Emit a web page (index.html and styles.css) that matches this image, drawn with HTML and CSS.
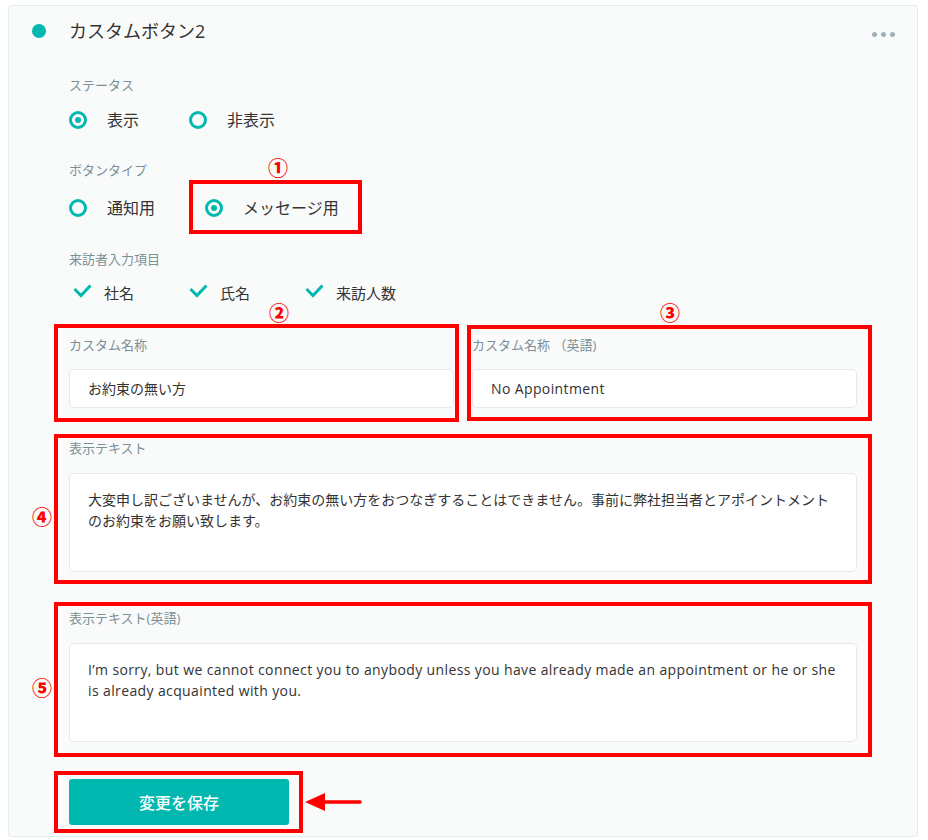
FILE: index.html
```html
<!DOCTYPE html>
<html lang="ja">
<head>
<meta charset="utf-8">
<title>カスタムボタン2</title>
<link rel="stylesheet" href="styles.css">
</head>
<body>
<div class="page">
  <section class="card">
    <header class="card-head">
      <span class="status-dot"></span>
      <h2 class="card-title">カスタムボタン2</h2>
      <span class="more"><i></i><i></i><i></i></span>
    </header>
    <div class="card-body">
      <div class="group g-status">
        <div class="label">ステータス</div>
        <div class="options">
          <span class="radio checked"><span class="radio-mark"></span>表示</span>
          <span class="radio"><span class="radio-mark"></span>非表示</span>
        </div>
      </div>
      <div class="group g-type">
        <div class="label">ボタンタイプ</div>
        <div class="options">
          <span class="radio"><span class="radio-mark"></span>通知用</span>
          <span class="radio checked"><span class="radio-mark"></span>メッセージ用</span>
        </div>
      </div>
      <div class="group g-visitor">
        <div class="label">来訪者入力項目</div>
        <div class="checks">
          <span class="check"><svg class="check-icon" viewBox="0 0 19 14" width="19" height="14"><polyline points="1.5,5 8,11.5 17.5,1.5"/></svg>社名</span>
          <span class="check"><svg class="check-icon" viewBox="0 0 19 14" width="19" height="14"><polyline points="1.5,5 8,11.5 17.5,1.5"/></svg>氏名</span>
          <span class="check"><svg class="check-icon" viewBox="0 0 19 14" width="19" height="14"><polyline points="1.5,5 8,11.5 17.5,1.5"/></svg>来訪人数</span>
        </div>
      </div>
      <div class="name-row">
        <div class="field">
          <div class="label">カスタム名称</div>
          <div class="input">お約束の無い方</div>
        </div>
        <div class="field">
          <div class="label">カスタム名称 （英語)</div>
          <div class="input en">No Appointment</div>
        </div>
      </div>
      <div class="field g-text">
        <div class="label">表示テキスト</div>
        <div class="textarea">大変申し訳ございませんが、お約束の無い方をおつなぎすることはできません。事前に弊社担当者とアポイントメントのお約束をお願い致します。</div>
      </div>
      <div class="field g-text-en">
        <div class="label">表示テキスト(英語)</div>
        <div class="textarea en">I’m sorry, but we cannot connect you to anybody unless you have already made an appointment or he or she is already acquainted with you.</div>
      </div>
      <button class="save-btn" type="button">変更を保存</button>
    </div>
  </section>

  <div class="annot box box-1"></div>
  <div class="annot num num-1">①</div>
  <div class="annot box box-2"></div>
  <div class="annot num num-2">②</div>
  <div class="annot box box-3"></div>
  <div class="annot num num-3">③</div>
  <div class="annot box box-4"></div>
  <div class="annot num num-4">④</div>
  <div class="annot box box-5"></div>
  <div class="annot num num-5">⑤</div>
  <div class="annot box box-6"></div>
  <svg class="annot arrow" viewBox="0 0 60 22" width="60" height="22">
    <polygon points="2,11 22,2 22,20" fill="#ff0000"/>
    <line x1="20" y1="11" x2="57" y2="11" stroke="#ff0000" stroke-width="3.5" stroke-linecap="round"/>
  </svg>
</div>
</body>
</html>
```

FILE: styles.css
```css
* { box-sizing: border-box; }

html, body {
  margin: 0;
  padding: 0;
  background: #ffffff;
}

body {
  font-family: "Open Sans", "Noto Sans CJK JP", sans-serif;
  color: #333333;
}

.page {
  position: relative;
  padding: 5px 0 0 8px;
  width: 928px;
  height: 840px;
}

.card {
  width: 910px;
  height: 832px;
  background: #f9fbfb;
  border: 1px solid #e2eded;
  border-radius: 3px;
}

/* header */
.card-head {
  display: flex;
  align-items: center;
  padding: 13px 22px 0 23px;
  height: 37px;
}

.status-dot {
  width: 14px;
  height: 14px;
  border-radius: 50%;
  background: #00b8b0;
  flex: none;
}

.card-title {
  margin: 0 0 0 23px;
  font-size: 18px;
  font-weight: 400;
  line-height: 24px;
  color: #333333;
  flex: 1;
}

.more {
  display: flex;
  gap: 4px;
  margin-top: 6px;
}

.more i {
  width: 5px;
  height: 5px;
  border-radius: 50%;
  background: #a0b2b9;
}

/* body */
.card-body {
  padding: 0 60px 11px;
}

.label {
  font-size: 13px;
  line-height: 20px;
  color: #7b8f96;
  white-space: pre;
}

.g-status { margin-top: 32px; }
.g-status .options { margin-top: 13px; }
.g-type { margin-top: 28px; }
.g-type .options { margin-top: 16px; }
.g-visitor { margin-top: 29px; }
.g-visitor .checks { margin-top: 12px; }

.options {
  display: flex;
  gap: 50px;
  height: 24px;
  align-items: center;
}

.radio {
  display: flex;
  align-items: center;
  gap: 20px;
  font-size: 16px;
  line-height: 24px;
  color: #333333;
}

.radio-mark {
  width: 18px;
  height: 18px;
  border: 3px solid #00b8b0;
  border-radius: 50%;
  display: flex;
  align-items: center;
  justify-content: center;
  flex: none;
}

.radio.checked .radio-mark::after {
  content: "";
  width: 6px;
  height: 6px;
  border-radius: 50%;
  background: #00b8b0;
}

.checks {
  display: flex;
  gap: 55px;
  height: 24px;
  align-items: center;
  padding-left: 4px;
}

.check {
  display: flex;
  align-items: center;
  font-size: 15px;
  line-height: 24px;
  color: #333333;
}

.check-icon {
  margin-right: 12px;
  margin-top: -4px;
  fill: none;
  stroke: #00b8b0;
  stroke-width: 3;
  stroke-linecap: butt;
  stroke-linejoin: miter;
}

/* fields */
.name-row {
  display: grid;
  grid-template-columns: 385px 385px;
  column-gap: 18px;
  margin-top: 30px;
}

.field .label { margin-bottom: 14px; }

.input {
  height: 39px;
  background: #ffffff;
  border: 1px solid #e4e9ee;
  border-radius: 5px;
  padding: 0 18px;
  font-size: 14px;
  line-height: 37px;
  color: #333333;
}

.en { letter-spacing: 0.38px; }

.g-text { margin-top: 30px; }
.g-text-en { margin-top: 36px; }
.g-text .label, .g-text-en .label { margin-bottom: 15px; }

.textarea {
  height: 99px;
  background: #ffffff;
  border: 1px solid #e4e9ee;
  border-radius: 5px;
  padding: 15px 18px;
  font-size: 14px;
  line-height: 21px;
  color: #333333;
}

.save-btn {
  display: block;
  margin-top: 37px;
  width: 220px;
  height: 46px;
  border: none;
  border-radius: 3px;
  background: #00b8b0;
  color: #ffffff;
  font-family: "Noto Sans CJK JP", sans-serif;
  font-size: 16px;
  font-weight: 500;
  padding: 0;
}

/* annotations (overlay) */
.annot {
  position: absolute;
}

.box {
  border: 4px solid #ff0000;
}

.box-1 { left: 189px; top: 180px; width: 173px; height: 54px; }
.box-2 { left: 54px; top: 324px; width: 405px; height: 98px; }
.box-3 { left: 467px; top: 325px; width: 405px; height: 96px; }
.box-4 { left: 54px; top: 434px; width: 818px; height: 150px; }
.box-5 { left: 54px; top: 602px; width: 818px; height: 155px; }
.box-6 { left: 54px; top: 771px; width: 249px; height: 62px; }

.num {
  font-family: "Noto Sans CJK JP", sans-serif;
  font-size: 20px;
  font-weight: 900;
  line-height: 24px;
  width: 24px;
  text-align: center;
  color: #ff0000;
}

.num-1 { left: 266px; top: 156px; }
.num-2 { left: 267px; top: 301px; }
.num-3 { left: 658px; top: 301px; }
.num-4 { left: 30px; top: 505px; }
.num-5 { left: 30px; top: 676px; }

.arrow { left: 303px; top: 791px; }
```
